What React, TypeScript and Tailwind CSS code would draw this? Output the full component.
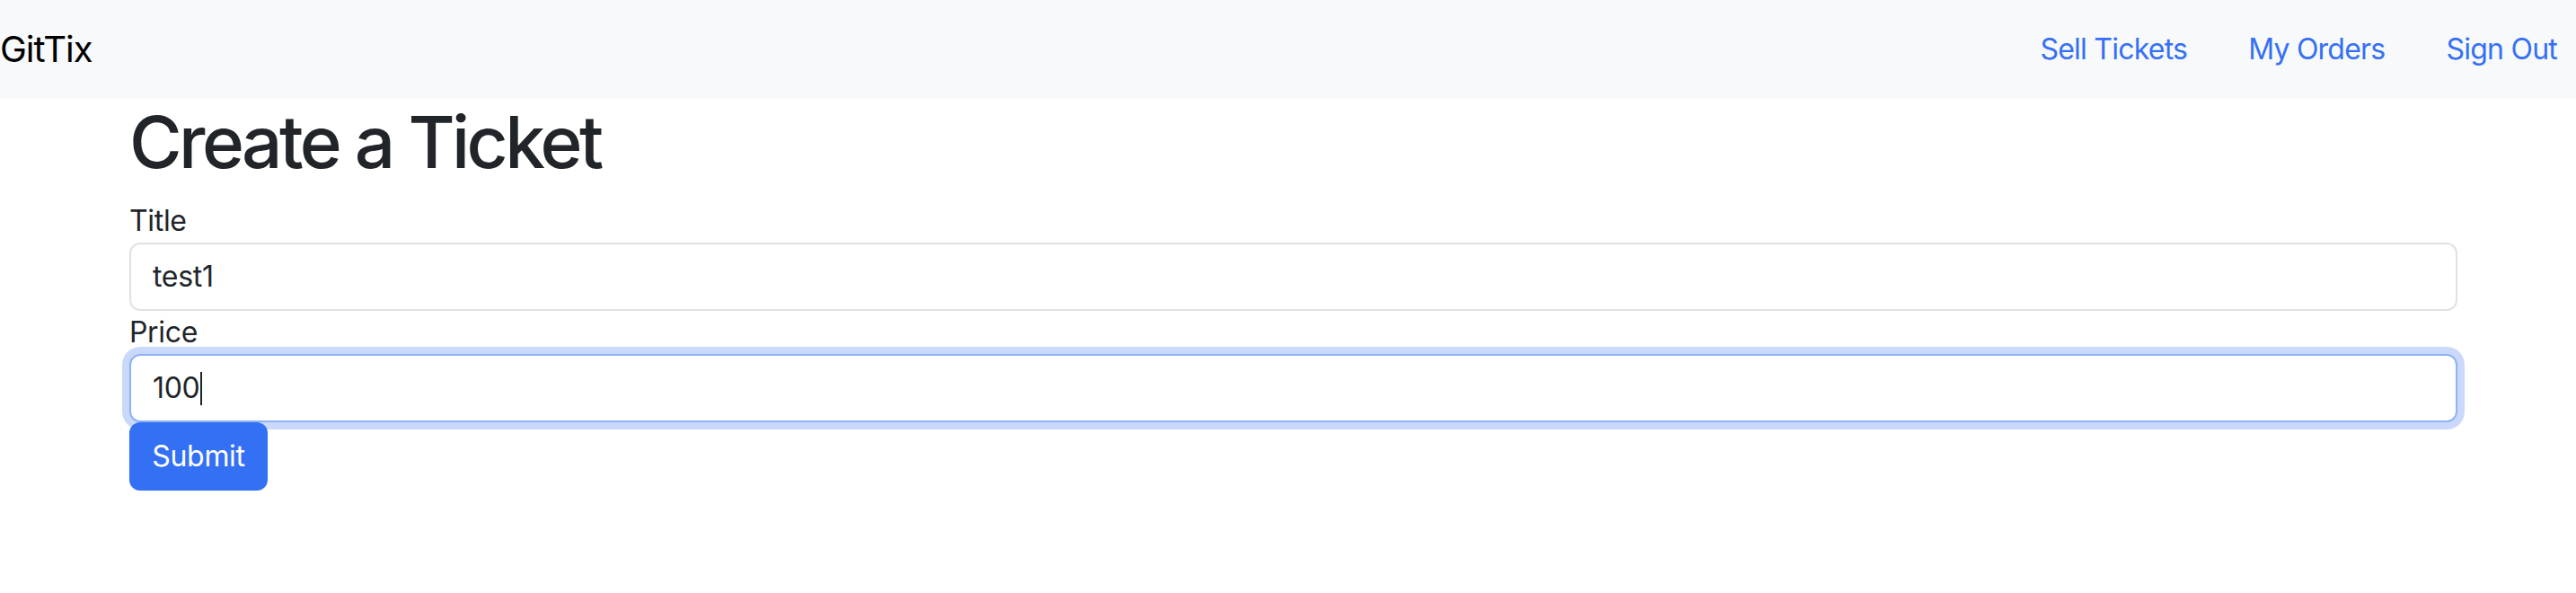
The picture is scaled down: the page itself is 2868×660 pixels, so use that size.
import React from "react";

const navLinks = ["Sell Tickets", "My Orders", "Sign Out"];

const Field: React.FC<{ label: string; value: string; focused?: boolean }> = ({
  label,
  value,
  focused,
}) => (
  <div>
    <div className="text-[32px] leading-[48px] text-[#212529]">{label}</div>
    <div
      className={
        focused
          ? "flex h-[76px] items-center rounded-[12px] border-2 border-[#8db3f6] bg-white px-[24px] text-[32px] text-[#212529] shadow-[0_0_0_8px_#cad9fb]"
          : "flex h-[76px] items-center rounded-[12px] border-2 border-[#dfe2e6] bg-white px-[24px] text-[32px] text-[#212529]"
      }
    >
      <span>{value}</span>
      {focused && <span className="ml-[1px] h-[37px] w-[2px] bg-[#212529]" />}
    </div>
  </div>
);

export default function App() {
  return (
    <div className="min-h-[660px] bg-white font-['Inter',sans-serif] tracking-[-0.02em]">
      <nav className="flex h-[110px] items-center justify-between bg-[#f8f9fa] pr-[21px]">
        <span className="text-[40px] leading-none tracking-[-0.025em] text-black">GitTix</span>
        <div className="flex items-center gap-[68px]">
          {navLinks.map((link) => (
            <a key={link} className="text-[32px] leading-none tracking-[-0.024em] text-[#3470f4]">
              {link}
            </a>
          ))}
        </div>
      </nav>

      <div className="ml-[144px] w-[2592px]">
        <h1 className="mb-[16px] text-[80px] font-medium leading-[96px] tracking-[-0.045em] text-[#212529]">
          Create a Ticket
        </h1>
        <form>
          <Field label="Title" value="test1" />
          <Field label="Price" value="100" focused />
          <button
            type="button"
            className="h-[76px] w-[154px] rounded-[12px] bg-[#3470f4] text-[32px] text-white"
          >
            Submit
          </button>
        </form>
      </div>
    </div>
  );
}
